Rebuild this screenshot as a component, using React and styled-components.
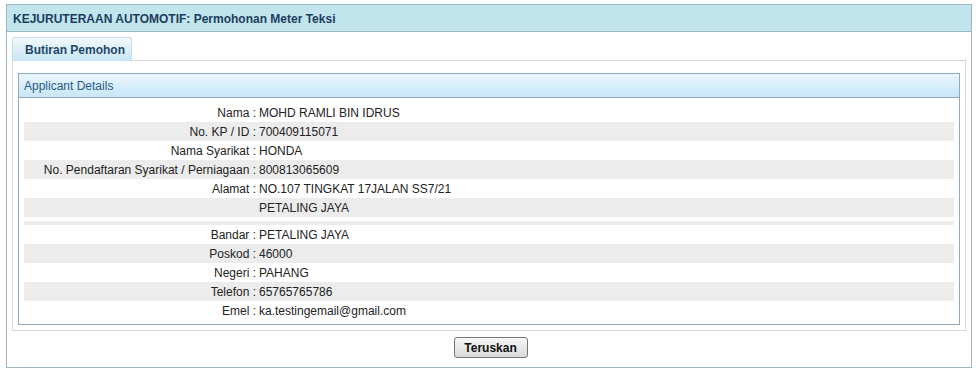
import React from 'react';
import styled, { createGlobalStyle } from 'styled-components';

const GlobalStyle = createGlobalStyle`
    body {
        margin: 0;
        background: #fff;
        font-family: "Liberation Sans", Arial, sans-serif;
        font-size: 12px;
        color: #222;
    }
`;

const Panel = styled.div`
    box-sizing: border-box;
    width: 966px;
    margin: 4px 0 0 6px;
    border: 1px solid #9db7c3;
    padding-bottom: 9px;
`;

const PanelHeader = styled.div`
    height: 26px;
    line-height: 28px;
    padding-left: 6px;
    background: #c1e4ed;
    border-bottom: 1px solid #9db7c3;
    font-weight: bold;
    color: #1c3e5e;
`;

const PanelBody = styled.div`
    padding: 5px 5px 0 5px;
`;

const TabBar = styled.div`
    display: flex;
    position: relative;
    z-index: 1;
`;

const Tab = styled.div`
    box-sizing: border-box;
    width: 120px;
    height: 24px;
    margin-bottom: -1px;
    padding-left: 12px;
    line-height: 24px;
    border: 1px solid #cbdde6;
    border-bottom: none;
    border-radius: 3px 3px 0 0;
    background: linear-gradient(#f2f9fc, #c6e5f4);
    font-weight: bold;
    color: #1f4567;
`;

const TabContent = styled.div`
    border: 1px solid #ddd6cd;
    padding: 12px 5px 5px 5px;
`;

const Fieldset = styled.div`
    border: 1px solid #8eaabb;
`;

const FieldsetHeader = styled.div`
    height: 23px;
    line-height: 25px;
    padding-left: 5px;
    background: linear-gradient(#e9f6fd, #c8e6f8);
    border-bottom: 1px solid #8eaabb;
    color: #2a5b84;
`;

const Rows = styled.div`
    padding: 5px 5px 4px 5px;
`;

const Row = styled.div`
    display: grid;
    grid-template-columns: 232px 1fr;
    height: ${p => (p.$spacer ? 4 : 19)}px;
    line-height: 21px;
    background: ${p => (p.$shaded ? '#ececec' : '#fff')};
`;

const Label = styled.div`
    text-align: right;
    white-space: nowrap;
`;

const Value = styled.div`
    padding-left: 3px;
    white-space: nowrap;
`;

const Actions = styled.div`
    display: flex;
    justify-content: center;
    padding-top: 6px;
`;

const Button = styled.button`
    box-sizing: border-box;
    width: 74px;
    height: 21px;
    margin-left: 3px;
    padding: 0;
    border: 1px solid #767676;
    border-radius: 3px;
    background: linear-gradient(#f7f7f7, #d9d9d9);
    font-family: "Liberation Sans", Arial, sans-serif;
    font-size: 12px;
    font-weight: bold;
    color: #111;
`;

const rows = [
    ['Nama', 'MOHD RAMLI BIN IDRUS'],
    ['No. KP / ID', '700409115071'],
    ['Nama Syarikat', 'HONDA'],
    ['No. Pendaftaran Syarikat / Perniagaan', '800813065609'],
    ['Alamat', 'NO.107 TINGKAT 17JALAN SS7/21'],
    ['', 'PETALING JAYA'],
    null,
    null,
    ['Bandar', 'PETALING JAYA'],
    ['Poskod', '46000'],
    ['Negeri', 'PAHANG'],
    ['Telefon', '65765765786'],
    ['Emel', 'ka.testingemail@gmail.com'],
];

export default function App() {
    return (
        <>
            <GlobalStyle />
            <Panel>
                <PanelHeader>KEJURUTERAAN AUTOMOTIF: Permohonan Meter Teksi</PanelHeader>
                <PanelBody>
                    <TabBar>
                        <Tab>Butiran Pemohon</Tab>
                    </TabBar>
                    <TabContent>
                        <Fieldset>
                            <FieldsetHeader>Applicant Details</FieldsetHeader>
                            <Rows>
                                {rows.map((r, i) =>
                                    r ? (
                                        <Row key={i} $shaded={i % 2 === 1}>
                                            <Label>{r[0] ? `${r[0]} :` : ''}</Label>
                                            <Value>{r[1]}</Value>
                                        </Row>
                                    ) : (
                                        <Row key={i} $spacer $shaded={i % 2 === 1} />
                                    )
                                )}
                            </Rows>
                        </Fieldset>
                    </TabContent>
                    <Actions>
                        <Button type="button">Teruskan</Button>
                    </Actions>
                </PanelBody>
            </Panel>
        </>
    );
}
